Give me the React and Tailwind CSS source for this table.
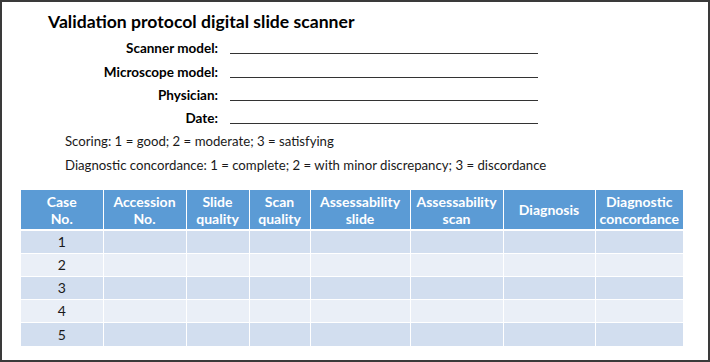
import React from 'react';

const fields = ['Scanner model:', 'Microscope model:', 'Physician:', 'Date:'];

const columns = [
  { label: ['Case', 'No.'], w: 'w-[82px]' },
  { label: ['Accession', 'No.'], w: 'w-[83px]' },
  { label: ['Slide', 'quality'], w: 'w-[63px]' },
  { label: ['Scan', 'quality'], w: 'w-[61px]' },
  { label: ['Assessability', 'slide'], w: 'w-[100px]' },
  { label: ['Assessability', 'scan'], w: 'w-[93px]' },
  { label: ['Diagnosis'], w: 'w-[92px]' },
  { label: ['Diagnostic', 'concordance'], w: 'w-[88px]' },
];

const rows = [1, 2, 3, 4, 5];

export default function App() {
  return (
    <div
      className="w-[710px] h-[362px] bg-white border-2 border-[#3a3a3a] text-[#1a1a1a]"
      style={{ fontFamily: 'Lato, "Open Sans", sans-serif' }}
    >
      <h1 className="pl-[46px] pt-[8px] text-[17.6px] leading-[24px] font-bold text-black">
        Validation protocol digital slide scanner
      </h1>

      <div className="flex flex-col">
        {fields.map((f) => (
          <div key={f} className="flex items-end h-[23.3px]">
            <div className="w-[216px] text-right text-[13.5px] leading-[18px] font-bold text-black">{f}</div>
            <div className="ml-[12px] w-[308px] border-b border-[#333] mb-[3px]" />
          </div>
        ))}
      </div>

      <div className="pl-[63px] mt-[5px] text-[13.2px] leading-[18px]">
        Scoring: 1 = good; 2 = moderate; 3 = satisfying
      </div>
      <div className="pl-[63px] mt-[6px] text-[13.2px] leading-[18px]">
        Diagnostic concordance: 1 = complete; 2 = with minor discrepancy; 3 = discordance
      </div>

      <div className="pl-[19px] mt-[16px]">
        <table className="border-collapse table-fixed w-[662px]">
          <thead>
            <tr className="h-[40px] bg-[#5b9bd5]">
              {columns.map((c, i) => (
                <th
                  key={i}
                  className={`${c.w} border-x border-white border-b-2 text-white text-[14px] leading-[17px] font-bold text-center align-middle p-0 first:border-l-0 last:border-r-0`}
                >
                  {c.label.map((l) => (
                    <div key={l}>{l}</div>
                  ))}
                </th>
              ))}
            </tr>
          </thead>
          <tbody>
            {rows.map((r) => (
              <tr key={r} className={`h-[23.2px] ${r % 2 ? 'bg-[#d2deef]' : 'bg-[#eaeff7]'}`}>
                {columns.map((c, i) => (
                  <td
                    key={i}
                    className="border border-white p-0 text-center text-[14px] leading-[18px] first:border-l-0 last:border-r-0"
                  >
                    {i === 0 ? r : ''}
                  </td>
                ))}
              </tr>
            ))}
          </tbody>
        </table>
      </div>
    </div>
  );
}
